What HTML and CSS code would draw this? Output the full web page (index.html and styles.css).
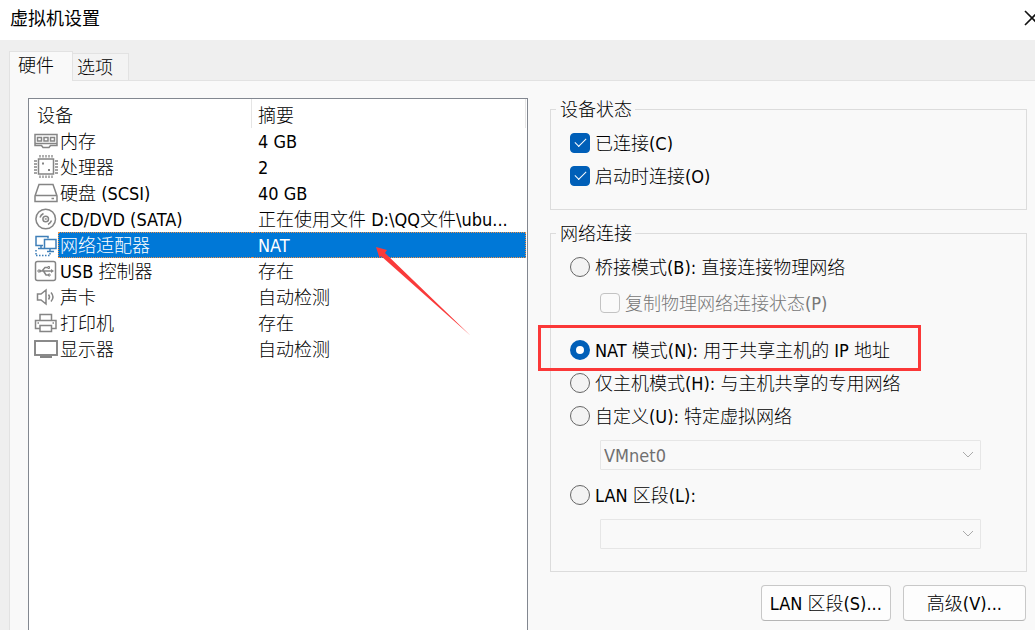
FILE: index.html
```html
<!DOCTYPE html>
<html lang="zh-CN">
<head>
<meta charset="utf-8">
<title>虚拟机设置</title>
<link rel="stylesheet" href="styles.css">
</head>
<body>
<header class="titlebar">
  <h1 class="title">虚拟机设置</h1>
  <button class="close" type="button" aria-label="关闭"><svg width="16" height="16" viewBox="0 0 16 16"><path d="M1 1L15 15M15 1L1 15" fill="none" stroke="#111" stroke-width="1.6"/></svg></button>
</header>
<main class="main">
  <div class="tabs" role="tablist">
    <button class="tab tab-active" type="button" role="tab" aria-selected="true">硬件</button>
    <button class="tab" type="button" role="tab" aria-selected="false">选项</button>
  </div>
  <div class="panel">
    <section class="devices">
      <table class="device-table">
        <colgroup><col class="w-icon"><col class="w-name"><col></colgroup>
        <thead><tr><th colspan="2">设备</th><th class="col-summary">摘要</th></tr></thead>
        <tbody>
          <tr><td class="icon"><svg viewBox="0 0 24 26"><path d="M1 6.500H23V17.500H16.500L15 19.500H9L7.500 17.500H1Z"/><path d="M3.500 9.500H7.500V13H3.500ZM10 9.500H14V13H10ZM16.500 9.500H20.500V13H16.500Z"/><path d="M1 15.500H23"/></svg></td><td>内存</td><td>4 GB</td></tr>
          <tr><td class="icon"><svg viewBox="0 0 24 26"><rect x="4.500" y="5" width="15" height="15"/><path d="M6 1V3.500M9 1V3.500M12 1V3.500M15 1V3.500M18 1V3.500M6 21.500V24M9 21.500V24M12 21.500V24M15 21.500V24M18 21.500V24M0 7H3M0 10H3M0 13H3M0 16H3M0 19H3M21 7H24M21 10H24M21 13H24M21 16H24M21 19H24" stroke-width="1.300"/><path d="M8 9.500H10M14 16H16" stroke-width="2"/></svg></td><td>处理器</td><td>2</td></tr>
          <tr><td class="icon"><svg viewBox="0 0 24 26"><path d="M1 16L5 4.500H19L23 16V21.500H1ZM1 15.500H23M17.500 18.500H20"/></svg></td><td>硬盘 (SCSI)</td><td>40 GB</td></tr>
          <tr><td class="icon"><svg viewBox="0 0 24 26"><circle cx="11.700" cy="13" r="9.800"/><circle cx="11.700" cy="13" r="2.800"/><circle cx="11.700" cy="13" r=".3"/><path d="M6 11.500A6.500 6.500 0 0 1 9.500 7.500M17.500 14.500A6.500 6.500 0 0 1 14 18.500"/></svg></td><td>CD/DVD (SATA)</td><td>正在使用文件 D:\QQ文件\ubu...</td></tr>
          <tr class="selected"><td class="icon icon-blue"><svg viewBox="0 0 24 26"><path d="M9 13.500H2V4.500H14V6.500M7 13.500V16.500M4 16.500H10"/><path d="M10.500 7.500H22V16.500H10.500ZM16 16.500V19.500M13 19.500H20"/><path d="M2 18V24M2 23.500H16M16 21V24" stroke-dasharray="1.500 1.500"/></svg></td><td>网络适配器</td><td>NAT</td></tr>
          <tr><td class="icon"><svg viewBox="0 0 24 26"><rect x="1.500" y="3.500" width="20" height="19" rx="2"/><path d="M5 13H18M8 13L11 9.500H14M9.500 13L12 17H15"/><path d="M4 12H6.500V14H4ZM14 8.500H15.500V10.500H14ZM14.500 16H16V18H14.500Z" stroke-width="1"/><path d="M17 11L20 13L17 15Z" fill="#858585" stroke="none"/></svg></td><td>USB 控制器</td><td>存在</td></tr>
          <tr><td class="icon"><svg viewBox="0 0 24 26"><path d="M3.500 10H7L12 6V20L7 16H3.500ZM14.500 10.500Q16.500 13 14.500 15.500M17 8.500Q21 13 17 17.500"/></svg></td><td>声卡</td><td>自动检测</td></tr>
          <tr><td class="icon"><svg viewBox="0 0 24 26"><path d="M6 10V4.500H17.500V10M6 18.500H1.500V10.500H22V18.500H17.500M6 15.500H17.500V21.500H6ZM3.500 13H5M18.500 13H20"/></svg></td><td>打印机</td><td>存在</td></tr>
          <tr><td class="icon"><svg viewBox="0 0 24 26"><rect x="1" y="5" width="22" height="14" stroke-width="1.900"/><path d="M6 21H18" stroke-width="2"/></svg></td><td>显示器</td><td>自动检测</td></tr>
        </tbody>
      </table>
      <svg class="arrow" width="100" height="94" viewBox="0 0 100 94" aria-hidden="true"><path d="M0 0L11 3L9 6L95 89L5 9L3.500 11Z" fill="#f93a3a"/></svg>
    </section>
    <section class="settings">
      <fieldset class="group group-status">
        <legend>设备状态</legend>
        <label class="option"><input class="check" type="checkbox" checked>已连接(C)</label>
        <label class="option"><input class="check" type="checkbox" checked>启动时连接(O)</label>
      </fieldset>
      <fieldset class="group group-network">
        <legend>网络连接</legend>
        <label class="option"><input class="radio" type="radio" name="net">桥接模式(B): 直接连接物理网络</label>
        <label class="option option-sub"><input class="check" type="checkbox" disabled>复制物理网络连接状态(P)</label>
        <label class="option option-marked"><input class="radio" type="radio" name="net" checked>NAT 模式(N): 用于共享主机的 IP 地址</label>
        <label class="option"><input class="radio" type="radio" name="net">仅主机模式(H): 与主机共享的专用网络</label>
        <label class="option"><input class="radio" type="radio" name="net">自定义(U): 特定虚拟网络</label>
        <div class="combo"><select class="select" aria-label="虚拟网络" disabled><option>VMnet0</option></select><svg class="chevron" viewBox="0 0 12 8"><path d="M1 1L6 6L11 1"/></svg></div>
        <label class="option"><input class="radio" type="radio" name="net">LAN 区段(L):</label>
        <div class="combo"><select class="select" aria-label="LAN 区段" disabled><option></option></select><svg class="chevron" viewBox="0 0 12 8"><path d="M1 1L6 6L11 1"/></svg></div>
      </fieldset>
      <div class="actions">
        <button class="button" type="button">LAN 区段(S)...</button>
        <button class="button button-advanced" type="button">高级(V)...</button>
      </div>
    </section>
  </div>
</main>
</body>
</html>
```

FILE: styles.css
```css
* { box-sizing: border-box; }

body {
  margin: 0;
  height: 100vh;
  overflow: hidden;
  display: flex;
  flex-direction: column;
  background: #efefef;
  color: #000;
  font: 400 18px/24px "DejaVu Sans Condensed", "Noto Sans CJK SC Light", "Noto Sans CJK SC", sans-serif;
}

button, select { font: inherit; color: inherit; }

.titlebar {
  display: flex;
  align-items: center;
  justify-content: space-between;
  height: 40px;
  flex: none;
  padding-left: 10px;
  background: #fff;
}
.title { margin: 0; padding-bottom: 7px; font: 400 18px/24px "Noto Sans CJK SC", sans-serif; }
.close { display: flex; margin: 0 -5px 4px 0; padding: 0; border: 0; background: none; }

.main { flex: 1; min-height: 0; display: flex; flex-direction: column; padding: 11px 0 0 9px; }

.tabs { display: flex; align-items: flex-end; flex: none; }
.tab {
  height: 27px;
  padding: 2px 15px 0 4px;
  border: 1px solid #e2e2e2;
  border-width: 1px 1px 0 0;
  background: #f3f3f3;
  line-height: 24px;
}
.tab-active {
  height: 30px;
  margin-bottom: -1px;
  padding: 0 18px 1px 8px;
  border-left-width: 1px;
  background: #f9f9f9;
  position: relative;
}

.panel {
  flex: 1;
  min-height: 0;
  display: grid;
  grid-template-columns: 500fr 477fr;
  column-gap: 22px;
  padding: 16px 8px 0 18px;
  border: 1px solid #e2e2e2;
  border-width: 1px 0 0 1px;
  background: #f9f9f9;
}

.devices {
  position: relative;
  margin-top: 1px;
  border: 1px solid #828790;
  border-bottom: 0;
  background: #fff;
}
.device-table { width: 100%; border-collapse: separate; border-spacing: 0; table-layout: fixed; padding-right: 1px; }
.w-icon { width: 29px; }
.w-name { width: 194px; }
.device-table th {
  height: 29px;
  padding: 4px 0 0 8px;
  border-right: 1px solid #e5e5e5;
  font-weight: inherit;
  line-height: 24px;
  text-align: left;
}
.device-table .col-summary { padding-left: 6px; }
.device-table td { height: 26px; padding: 2px 0 0 6px; line-height: 24px; white-space: nowrap; }
.device-table td:nth-child(2) { padding-left: 2px; }
.device-table .icon { padding: 0 0 0 5px; }
.icon svg { display: block; width: 24px; height: 26px; fill: none; stroke: #858585; stroke-width: 1.5px; }
.icon-blue svg { stroke: #3f7fb8; }
.selected td:not(.icon) {
  background: #0078d7;
  color: #fff;
  border: 1px dotted #ef9249;
  border-width: 1px 0;
  line-height: 22px;
}
.selected td:nth-child(2) { border-left-width: 1px; padding-left: 1px; }
.selected td:last-child { border-right-width: 1px; }
.arrow { position: absolute; left: 347px; top: 148px; }

.group { min-width: 0; margin: 0; border: 1px solid #dcdcdc; display: block; }
.group legend { height: 24px; margin-left: -14px; padding: 1px 3px 0 4px; }
.group-status { padding: 6px 19px 16px; }
.group-network { margin-top: 11px; padding: 6px 19px 22px; }

.option { display: flex; align-items: center; gap: 5px; width: fit-content; height: 33px; white-space: nowrap; }
.option-sub { margin: 3px 0 14px 30px; color: #777; }
.option-marked { position: relative; }
.option-marked::after {
  content: "";
  position: absolute;
  inset: -9px -31px -4px -32px;
  border: 3px solid #fb3838;
}

.check, .radio {
  appearance: none;
  flex: none;
  width: 20px;
  height: 20px;
  margin: 0 0 2px;
  border: 1px solid #666;
  background: #f3f3f3;
}
.check { border-radius: 4px; }
.check:checked { border-color: #005fb8; background: #005fb8; display: grid; place-items: center; }
.check:checked::before {
  content: "";
  width: 10px;
  height: 5px;
  margin-bottom: 3px;
  border: solid #fff;
  border-width: 0 0 1px 1px;
  transform: rotate(-45deg);
}
.check:disabled { border-color: #c3c3c3; background: #fafafa; }
.radio { border-radius: 50%; }
.radio:checked { border: 6px solid #005fb8; background: #fff; }

.combo { position: relative; margin: 7px 26px 9px 30px; }
.combo:last-child { margin-bottom: 0; }
.select {
  appearance: none;
  display: block;
  width: 100%;
  height: 30px;
  padding: 2px 30px 0 3px;
  border: 1px solid #e6e6e6;
  border-radius: 1px;
  background: #f9f9f9;
  color: #707070;
  opacity: 1;
}
.chevron { position: absolute; right: 7px; top: 11px; width: 12px; height: 8px; fill: none; stroke: #aaa; }

.actions { display: flex; justify-content: flex-end; gap: 12px; margin: 13px 1px 0 0; }
.button {
  height: 36px;
  padding: 2px 8px 0;
  border: 1px solid #c8c8c8;
  border-bottom-color: #b5b5b5;
  border-radius: 4px;
  background: #fdfdfd;
  white-space: nowrap;
}
.button-advanced { padding: 2px 23px 0; }
```
